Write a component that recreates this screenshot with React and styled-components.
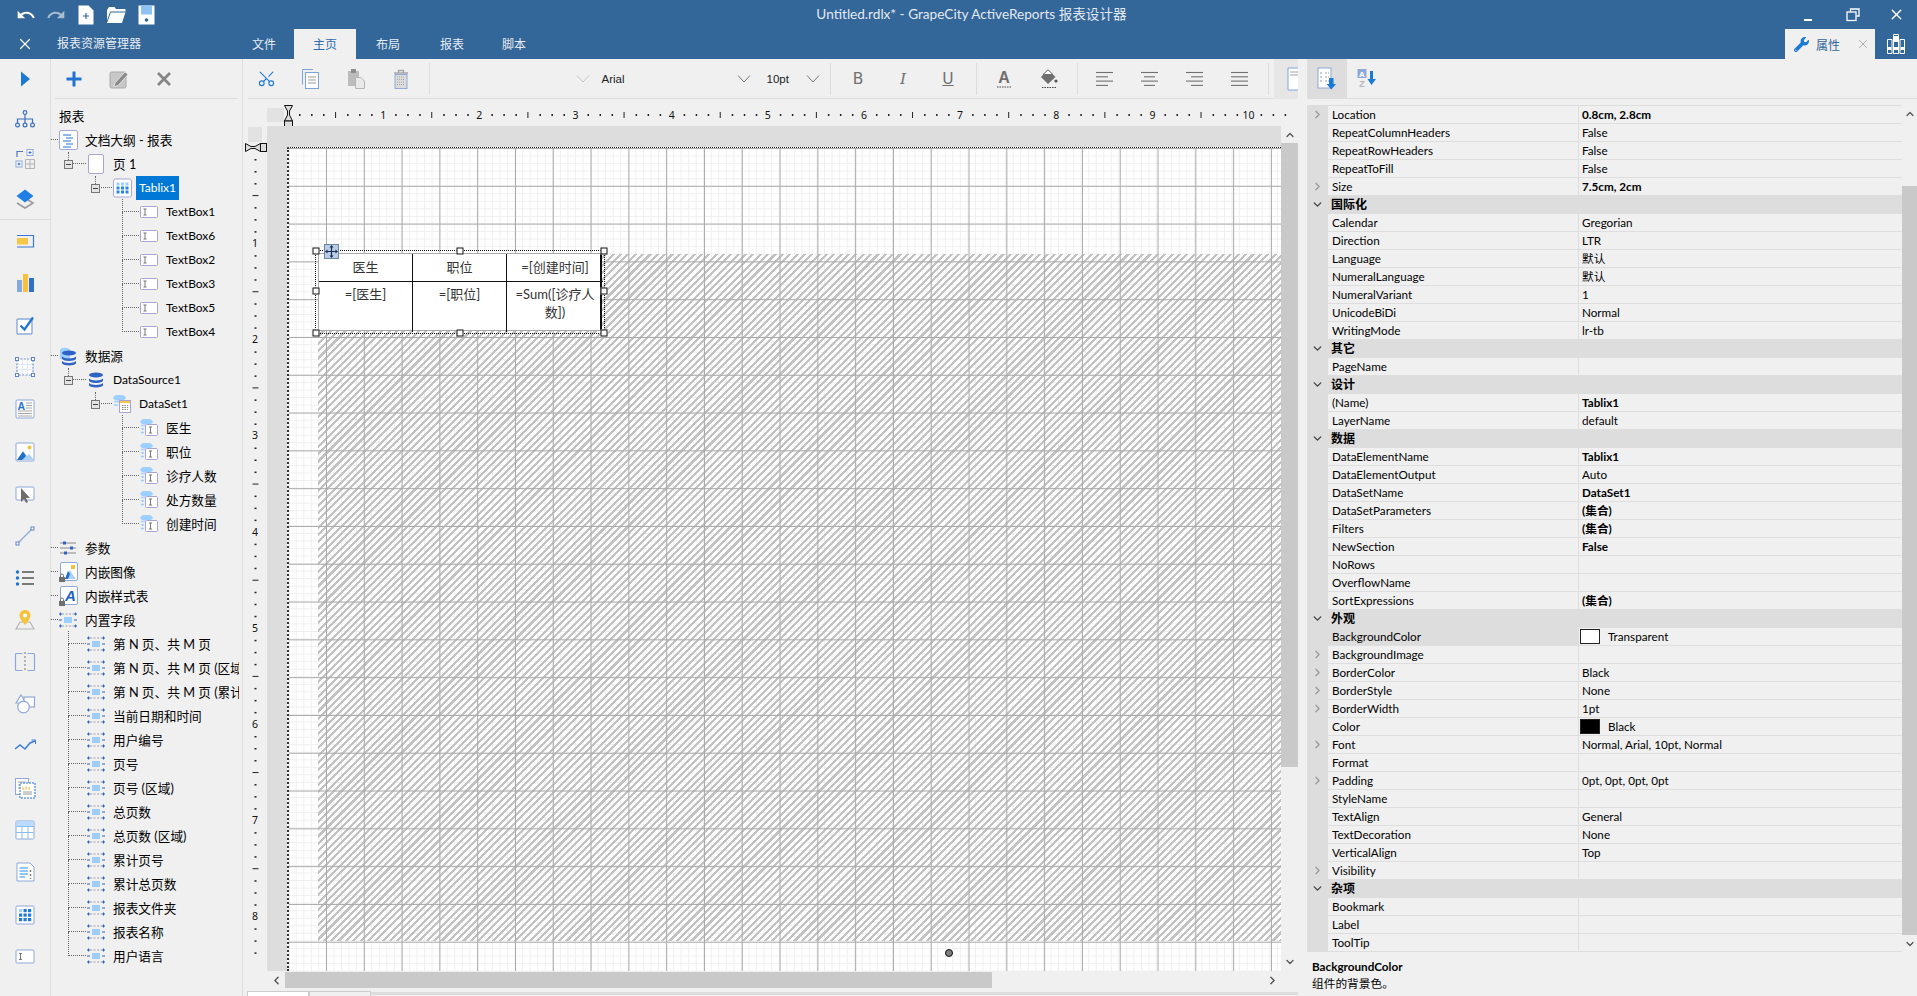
import React from "react";
import styled, { createGlobalStyle } from "styled-components";
import { ChevronRight, ChevronDown, ChevronUp, ChevronLeft, Scissors, X } from "lucide-react";
import { MdUndo, MdRedo } from "react-icons/md";
import { FaWrench } from "react-icons/fa";

const BLUE = "#336699";
const PANEL = "#f0f0f0";
const LINE = "#dddddd";
const FRAME = "#8ea9d8";
const ACCENT = "#1b7ad6";
const SOFT = "#9ccfff";

const GlobalStyle = createGlobalStyle`
  html, body { margin: 0; padding: 0; height: 100%; overflow: hidden; background: ${PANEL}; }
  body { font-family: Lato, "Noto Sans CJK SC", sans-serif; font-size: 11.7px; color: #000; }
  * { box-sizing: border-box; }
`;

const Shell = styled.div`
  width: 1917px;
  height: 996px;
  display: flex;
  flex-direction: column;
  overflow: hidden;
  background: ${PANEL};
`;

/* title bar */
const TitleBar = styled.header`
  background: ${BLUE};
  height: 59px;
  flex: none;
  color: #fff;
`;
const TopRow = styled.div`
  height: 29px;
  display: grid;
  grid-template-columns: 1fr auto 1fr;
  align-items: center;
`;
const QuickTools = styled.div`
  display: flex;
  padding-left: 11px;
`;
const QuickTool = styled.span`
  width: 30px;
  height: 29px;
  display: flex;
  align-items: center;
  justify-content: center;
  color: ${(p) => (p.$dim ? "#a9bdd2" : "#fff")};
`;
const AppTitle = styled.div`
  font-size: 13.6px;
  color: #e3e9f0;
  margin: -3px 0 0 26px;
  white-space: nowrap;
`;
const WindowTools = styled.div`
  display: flex;
  justify-content: flex-end;
`;
const WindowTool = styled.span`
  width: ${(p) => p.$w || 45}px;
  height: 29px;
  display: flex;
  align-items: center;
  justify-content: center;
`;
const TabRow = styled.div`
  height: 30px;
  display: flex;
  align-items: stretch;
`;
const CloseCell = styled.span`
  width: 49px;
  display: flex;
  align-items: center;
  justify-content: center;
`;
const ExplorerLabel = styled.span`
  width: 185px;
  padding-left: 8px;
  line-height: 30px;
  font-size: 12px;
  color: #e8edf3;
`;
const MenuTab = styled.span`
  width: ${(p) => p.$w}px;
  display: flex;
  align-items: center;
  justify-content: center;
  padding-bottom: 2px;
  font-size: 12px;
  color: ${(p) => (p.$active ? "#2b6cb0" : "#e8edf3")};
  background: ${(p) => (p.$active ? PANEL : "transparent")};
`;
const SideTab = styled.span`
  margin-left: auto;
  width: 90px;
  background: ${PANEL};
  color: #336699;
  display: flex;
  align-items: center;
  font-size: 12px;
  padding-left: 9px;
  gap: 7px;
`;
const SideTabClose = styled.span`
  margin-left: 9px;
  display: flex;
  color: #a8a8a8;
`;
const SideIcon = styled.span`
  width: 42px;
  display: flex;
  align-items: center;
  justify-content: center;
`;

/* main area */
const Main = styled.main`
  flex: 1;
  display: flex;
  min-height: 0;
`;

const Rail = styled.nav`
  width: 51px;
  flex: none;
  border-right: 1px solid ${LINE};
`;
const RailItem = styled.div`
  height: ${(p) => (p.$top ? 40 : 42.1)}px;
  display: flex;
  align-items: center;
  justify-content: center;
`;
const RailRule = styled.div`
  height: 1px;
  background: ${LINE};
`;

const TreePanel = styled.aside`
  width: 192px;
  flex: none;
  border-right: 1px solid ${LINE};
  overflow: hidden;
`;
const TreeTools = styled.div`
  height: 40px;
  margin: 0 4px;
  border-bottom: 1px solid ${LINE};
  display: flex;
  align-items: center;
  & > :first-child { margin-left: -4px; }
`;
const TreeTool = styled.span`
  width: 45px;
  display: flex;
  justify-content: center;
`;
const TreeHeading = styled.div`
  height: 24px;
  margin-top: 5px;
  padding-left: 8px;
  line-height: 24px;
  font-size: 12.7px;
`;
const TreeRow = styled.div`
  position: relative;
  height: 24px;
  display: flex;
  align-items: center;
  padding-left: ${(p) => [8, 36, 62, 89][p.$level]}px;
  padding-right: 3px;
  font-size: 12.7px;
  white-space: nowrap;
`;
const TreeGlyph = styled.span`
  width: 18px;
  height: 22px;
  flex: none;
  display: flex;
  align-items: center;
  justify-content: center;
  margin-right: 5px;
  background: ${PANEL};
  z-index: 1;
`;
const TreeText = styled.span`
  min-width: 0;
  overflow: hidden;
  padding: 0 3px;
  line-height: 24px;
  font-size: ${(p) => (p.$latin ? "12px" : "inherit")};
  background: ${(p) => (p.$selected ? "#0078d7" : "transparent")};
  color: ${(p) => (p.$selected ? "#fff" : "#000")};
`;
const Stem = styled.i`
  position: absolute;
  left: ${(p) => p.$x}px;
  width: ${(p) => p.$w}px;
  top: ${(p) => (p.$tall ? -12 : 0)}px;
  height: ${(p) => (p.$tall ? 24 : 12)}px;
  border-bottom: 1px dotted #666;
  border-left: ${(p) => (p.$bare ? "none" : "1px dotted #666")};
`;
const Expander = styled.i`
  position: absolute;
  left: ${(p) => p.$x}px;
  top: 8px;
  width: 9px;
  height: 9px;
  background: #e4e4e4;
  border: 1px solid #777;
  z-index: 1;
  &::after {
    content: "";
    position: absolute;
    left: 1px;
    right: 1px;
    top: 3px;
    height: 1px;
    background: #444;
  }
`;

/* centre column */
const Center = styled.section`
  width: 1055px;
  flex: none;
  display: flex;
  flex-direction: column;
  overflow: hidden;
`;
const Ribbon = styled.div`
  height: 40px;
  flex: none;
  margin-left: 5px;
  border-bottom: 1px solid ${LINE};
  display: flex;
  align-items: center;
`;
const RibbonGroup = styled.div`
  display: flex;
  margin-left: ${(p) => p.$shift || 0}px;
`;
const ToolButton = styled.span`
  width: 45px;
  height: 32px;
  display: flex;
  align-items: center;
  justify-content: center;
  color: #707070;
`;
const ToolLetter = styled.span`
  font-family: ${(p) => (p.$serif ? '"DejaVu Serif", serif' : '"DejaVu Sans", sans-serif')};
  font-size: 15.5px;
  font-style: ${(p) => (p.$italic ? "italic" : "normal")};
  text-decoration: ${(p) => (p.$under ? "underline" : "none")};
  color: #707070;
`;
const RibbonRule = styled.span`
  width: 1px;
  height: 32px;
  margin: 0 ${(p) => p.$after || 5}px 0 ${(p) => p.$before || 5}px;
  background: ${LINE};
`;
const FontBox = styled.div`
  width: ${(p) => p.$w}px;
  margin-left: ${(p) => p.$gap}px;
  display: flex;
  align-items: center;
  padding-top: 1px;
  color: #222;
  font-family: "Liberation Sans", sans-serif;
  font-size: 11.5px;
`;
const FontName = styled.span`
  margin-left: ${(p) => p.$gap}px;
`;
const Caret = styled.span`
  display: flex;
  margin-left: ${(p) => (p.$end ? "auto" : 0)};
`;
const RibbonEnd = styled.div`
  flex: 1;
  height: 40px;
  background: #e6e6e6;
  display: flex;
  align-items: center;
  padding-left: 13px;
`;
const TopRuler = styled.div`
  height: 27px;
  flex: none;
`;
const WorkArea = styled.div`
  height: 845px;
  flex: none;
  display: flex;
`;
const SideRuler = styled.div`
  width: 24px;
  flex: none;
`;
const Surface = styled.div`
  width: 1014px;
  flex: none;
  background: ${LINE};
  padding: 21px 0 0 20px;
  overflow: hidden;
`;
const Page = styled.div`
  position: relative;
  width: 100%;
  height: 100%;
  overflow: hidden;
  border-top: 1px dotted #222;
  border-left: 2px dotted #333;
  background-color: #fff;
  background-image:
    linear-gradient(#efefef 1.2px, transparent 1.2px),
    linear-gradient(90deg, #efefef 1.2px, transparent 1.2px);
  background-size: 100% 7.56px, 7.56px 100%;
  background-position: 0 0, -0.8px 0;
  &::before {
    content: "";
    position: absolute;
    inset: 0;
    z-index: 1;
    background-image:
      linear-gradient(#a9a9a9 1.4px, transparent 1.4px),
      linear-gradient(90deg, #a9a9a9 1.4px, transparent 1.4px);
    background-size: 100% 37.8px, 37.8px 100%;
    background-position: 0 0, -0.8px 0;
  }
`;
const Hatch = styled.div`
  position: absolute;
  left: 29px;
  top: 106px;
  right: 0;
  height: 687px;
  background: repeating-linear-gradient(135deg, #c2c2c2 0 2.2px, transparent 2.2px 5.2px);
`;
const Selection = styled.div`
  position: absolute;
  z-index: 2;
  left: 26px;
  top: 102px;
  width: 290px;
  height: 84px;
  border: 1px dotted #111;
`;
const Grip = styled.i`
  position: absolute;
  width: 7px;
  height: 7px;
  background: #fff;
  border: 1px solid #111;
  left: ${(p) => p.$x}%;
  top: ${(p) => p.$y}%;
  transform: translate(-50%, -50%);
`;
const MoveHandle = styled.span`
  position: absolute;
  left: 8px;
  top: -7px;
  width: 15px;
  height: 15px;
  background: #b9cde6;
  border: 1px solid #6c86a8;
  display: flex;
  align-items: center;
  justify-content: center;
`;
const ReportTable = styled.div`
  position: absolute;
  left: 2px;
  top: 2px;
  width: 284px;
  height: 78px;
  display: grid;
  grid-template-columns: 94px 94px 96px;
  grid-template-rows: 28px 50px;
  background: #fff;
  border-top: 1px solid #aaa;
  border-left: 1px solid #aaa;
  border-right: 2px solid #111;
  border-bottom: 1px solid #aaa;
  font-size: 13px;
  color: #333;
`;
const ReportCell = styled.div`
  text-align: center;
  line-height: 18px;
  padding: ${(p) => (p.$head ? "4px" : "3px")} 1px 0;
  border-right: ${(p) => (p.$last ? "none" : "1.5px solid #111")};
  border-bottom: ${(p) => (p.$head ? "1.5px solid #111" : "none")};
  white-space: ${(p) => (p.$wrap ? "normal" : "nowrap")};
`;
const Anchor = styled.i`
  position: absolute;
  z-index: 2;
  right: 328px;
  bottom: 14px;
  width: 8px;
  height: 8px;
  border-radius: 50%;
  background: #7d7d7d;
  border: 1px solid #111;
`;
const VScroll = styled.div`
  width: ${(p) => p.$w}px;
  flex: none;
  display: flex;
  flex-direction: column;
  align-items: center;
  color: #555;
`;
const ScrollEnd = styled.span`
  height: ${(p) => p.$h}px;
  flex: none;
  display: flex;
  align-items: center;
  justify-content: center;
  margin-top: ${(p) => (p.$push ? "auto" : 0)};
`;
const VThumb = styled.div`
  width: 100%;
  height: ${(p) => p.$h}px;
  margin-top: ${(p) => p.$gap || 0}px;
  background: #c9c9c9;
`;
const HScroll = styled.div`
  height: 18px;
  flex: none;
  margin-left: 24px;
  margin-right: 17px;
  display: flex;
  align-items: center;
  color: #555;
`;
const HEnd = styled.span`
  width: 18px;
  display: flex;
  justify-content: center;
  margin-left: ${(p) => (p.$push ? "auto" : 0)};
`;
const HThumb = styled.div`
  width: 707px;
  height: 16px;
  background: #c9c9c9;
`;
const SheetTabs = styled.div`
  flex: 1;
  display: flex;
  align-items: flex-start;
  margin-left: 4px;
  padding-top: 2px;
`;
const SheetTab = styled.span`
  width: 62px;
  height: 6px;
  background: ${(p) => (p.$on ? "#fff" : PANEL)};
  border: 1px solid #ccc;
  border-bottom: none;
`;
const SheetRest = styled.span`
  flex: 1;
  height: 3px;
  margin-top: 1px;
  background: ${LINE};
`;

const Splitter = styled.div`
  width: 9px;
  flex: none;
`;

/* property grid */
const Props = styled.section`
  flex: 1;
  display: flex;
  flex-direction: column;
  min-width: 0;
`;
const PropTools = styled.div`
  height: 40px;
  flex: none;
  border-bottom: 1px solid ${LINE};
  display: flex;
  margin-bottom: 6px;
`;
const PropTool = styled.span`
  width: 40px;
  display: flex;
  align-items: center;
  justify-content: center;
  background: ${(p) => (p.$on ? LINE : "transparent")};
`;
const PropBody = styled.div`
  display: flex;
  height: 848px;
  flex: none;
`;
const PropList = styled.div`
  width: 595px;
  flex: none;
  border-top: 1px solid ${LINE};
`;
const PropRow = styled.div`
  height: 18px;
  display: grid;
  grid-template-columns: 21px 251px 1fr;
  align-items: stretch;
  border-bottom: 1px solid #dedede;
  line-height: 17px;
  background: ${(p) => (p.$section ? LINE : "transparent")};
`;
const Gutter = styled.span`
  background: ${LINE};
  display: flex;
  align-items: center;
  justify-content: center;
  color: ${(p) => (p.$section ? "#444" : "#999")};
`;
const PropName = styled.span`
  padding-left: 4px;
  border-right: 1px solid #dedede;
  background: ${(p) => (p.$on ? LINE : "transparent")};
  white-space: nowrap;
`;
const SectionName = styled.span`
  grid-column: 2 / 4;
  padding-left: 3px;
  font-weight: 700;
  font-size: 12px;
`;
const PropValue = styled.span`
  padding-left: 3px;
  font-weight: ${(p) => (p.$bold ? 700 : 400)};
  display: flex;
  align-items: center;
  white-space: nowrap;
`;
const Swatch = styled.i`
  width: 20px;
  height: 15px;
  margin: 0 8px 0 -2px;
  background: ${(p) => p.$color};
  border: 1px solid #222;
`;
const Describe = styled.div`
  flex: 1;
  padding: 5px 0 0 5px;
  line-height: 17px;
`;
const DescribeTitle = styled.div`
  font-weight: 700;
`;

const Ico = styled.svg`
  display: block;
  flex: none;
`;

const G = ({ w = 22, h = 22, children }) => (
  <Ico width={w} height={h} viewBox={`0 0 ${w} ${h}`} fill="none">{children}</Ico>
);

const ThinCaret = ({ c = "#777" }) => (
  <G w={16} h={10}><path d="M2 1.500 8 8 14 1.500" stroke={c} strokeWidth="1" /></G>
);

/* rail drawings */
const railIcons = [
  <G><path d="M7 3.500 16 11 7 18.500Z" fill={ACCENT} /></G>,
  <G>
    <g stroke="#3c6fc2" strokeWidth="1.200">
      <circle cx="11" cy="4.500" r="1.800" />
      <path d="M11 6.500V11M3.500 15V11H18.500V15M11 11V15" />
      <circle cx="3.500" cy="17" r="1.900" /><circle cx="11" cy="17" r="1.900" /><circle cx="18.500" cy="17" r="1.900" />
    </g>
  </G>,
  <G>
    <path d="M3 9V3.500H9" stroke="#4a78c8" strokeWidth="1.200" />
    <rect x="13" y="1.500" width="6" height="6" stroke={FRAME} fill="#fff" />
    <path d="M16 3V6M14.500 4.500H17.500" stroke="#2d6fd0" />
    <rect x="2" y="13" width="6" height="6" stroke={FRAME} fill="#fff" />
    <path d="M5 14.500V17.500M3.500 16H6.500" stroke="#2d6fd0" />
    <path d="M11.500 11.500H20.500V20.500H11.500ZM16 11.500V20.500M11.500 16H20.500" stroke="#b3b3b3" />
  </G>,
  <G>
    <path d="M11 10 19 15 11 20 3 15" stroke="#9a9a9a" strokeWidth="1.600" />
    <path d="M11 1.500 19.500 8 11 14.500 2.500 8Z" fill="#1f7fe6" />
  </G>,
  <G>
    <rect x="3" y="8" width="11" height="6.500" fill="#f6c744" />
    <path d="M3 5.500H19.500V17H3" stroke="#3a7ad0" strokeWidth="1.200" />
  </G>,
  <G>
    <rect x="3" y="8" width="5" height="12" fill="#84abdf" />
    <rect x="9" y="2" width="5" height="18" fill="#f6c23c" />
    <rect x="15" y="6" width="5" height="14" fill="#2f6fc4" />
  </G>,
  <G>
    <rect x="3" y="5" width="15" height="15" rx="1" stroke={FRAME} strokeWidth="1.400" fill="#fff" />
    <path d="M6.500 11.500 10.500 15.500 19 3.500" stroke="#1f73d2" strokeWidth="2.200" />
  </G>,
  <G>
    <rect x="3" y="3" width="16" height="16" fill="#fff" />
    <path d="M3 8.500H19M3 13.500H19M8.500 3V19M13.500 3V19" stroke="#dfe8f6" />
    <rect x="3" y="3" width="16" height="16" stroke="#6f93d0" strokeWidth="1.200" strokeDasharray="2 1.400" />
    <g fill="#fff" stroke="#5c86cc"><rect x="1.500" y="1.500" width="3" height="3" /><rect x="17.500" y="1.500" width="3" height="3" /><rect x="1.500" y="17.500" width="3" height="3" /><rect x="17.500" y="17.500" width="3" height="3" /></g>
  </G>,
  <G>
    <rect x="2" y="2" width="18" height="18" rx="1" stroke={FRAME} fill="#fff" />
    <text x="3.500" y="12" fontSize="10.500" fontWeight="700" fill="#1f73d2" fontFamily="Liberation Sans">A</text>
    <path d="M12 5H18M12 7.500H18M12 10H18M4 13H18M4 15.500H18M4 18H18" stroke="#a4a4a4" />
  </G>,
  <G>
    <rect x="2" y="2" width="18" height="18" rx="1" stroke={FRAME} fill="#fff" />
    <circle cx="15.500" cy="6.500" r="2" fill="#f6c23c" />
    <path d="M3 19 9 10 13 15 15 13 20 19Z" fill="#a9d0f7" />
    <path d="M3 19 9 10.500 12 15 8 19Z" fill="#1f6fc9" />
  </G>,
  <G>
    <rect x="2" y="4" width="18" height="13" rx="1" stroke={FRAME} fill="#fff" />
    <path d="M7 5V19L10 16 12 20 14 19 12 15H16Z" fill="#6e6e6e" />
  </G>,
  <G>
    <path d="M4 18 18 4" stroke={FRAME} strokeWidth="1.200" />
    <rect x="2" y="17" width="3" height="3" stroke="#5c86cc" fill="#fff" />
    <rect x="17" y="2" width="3" height="3" stroke="#5c86cc" fill="#fff" />
  </G>,
  <G>
    <g fill="#1f73d2"><circle cx="3.500" cy="5" r="1.700" /><circle cx="3.500" cy="11" r="1.700" /><circle cx="3.500" cy="17" r="1.700" /></g>
    <path d="M8 5H20M8 11H20M8 17H20" stroke="#7a7a7a" strokeWidth="2" />
  </G>,
  <G>
    <path d="M2 20 6 13H16L20 20Z" stroke="#b5b5b5" strokeWidth="1.200" fill="none" />
    <path d="M11 1C7.500 1 5.500 3.500 5.500 6.500 5.500 10 11 16 11 16S16.500 10 16.500 6.500C16.500 3.500 14.500 1 11 1Z" fill="#f6c23c" />
    <circle cx="11" cy="6.500" r="2.100" fill="#fff" />
  </G>,
  <G>
    <path d="M8.500 2.500H2.500A1 1 0 0 0 1.500 3.500V18.500A1 1 0 0 0 2.500 19.500H8.500M13.500 2.500H19.500A1 1 0 0 1 20.500 3.500V18.500A1 1 0 0 1 19.500 19.500H13.500" stroke={FRAME} strokeWidth="1.200" />
    <path d="M11 1V21" stroke="#777" strokeDasharray="2 2" />
  </G>,
  <G>
    <path d="M7 2 12 10H2Z" stroke={FRAME} strokeWidth="1.200" fill="#fff" />
    <rect x="10" y="4" width="10.500" height="10" stroke={FRAME} strokeWidth="1.200" fill="#fff" />
    <circle cx="9.500" cy="14" r="5.800" stroke={FRAME} strokeWidth="1.200" fill="#fff" />
  </G>,
  <G><path d="M1 14 6 10 11 14 16 8 21 6" stroke="#3f7fd6" strokeWidth="1.600" /><path d="M17.500 5H21.500V9" stroke="#3f7fd6" strokeWidth="1" /></G>,
  <G>
    <rect x="1.500" y="1.500" width="13" height="16" stroke={FRAME} fill="#fff" />
    <path d="M4 5H12M4 8H12M4 11H12" stroke="#aaa" />
    <rect x="6" y="6" width="15" height="15" fill="#fff" stroke="#1f73d2" strokeDasharray="2 1" />
    <path d="M9 10V13M12 9.500V13M15 10V13" stroke="#f0b32c" />
    <path d="M9 15H18M9 17H18" stroke="#9a9a9a" />
  </G>,
  <G>
    <rect x="2" y="2" width="18" height="18" rx="1" stroke={FRAME} fill="#fff" />
    <rect x="2.500" y="2.500" width="17" height="5" fill="#b8dcfd" />
    <path d="M2 7.500H20M2 13.500H20M8 7.500V20M14 7.500V20" stroke="#8bbcf0" />
  </G>,
  <G>
    <path d="M3 2H16L20 6V20H3Z" stroke={FRAME} fill="#fff" />
    <path d="M5.500 7H14M5.500 10H14M5.500 13H14M5.500 16H11" stroke="#6fb4f5" strokeWidth="1.600" />
    <path d="M16.500 9V11M16.500 13V15M16.500 17V18" stroke="#777" strokeWidth="1.400" />
  </G>,
  <G>
    <rect x="2" y="2" width="18" height="18" rx="1" stroke={FRAME} fill="#fff" />
    {[5, 9.500, 14].map((y) => [5, 9.500, 14].map((x) => (
      <rect key={`${x}${y}`} x={x} y={y} width="3.200" height="3.200" fill={x > 9 || y > 9 ? "#1f7ad8" : SOFT} />
    )))}
  </G>,
  <G>
    <rect x="2" y="4" width="18" height="13" rx="1" stroke={FRAME} fill="#fff" />
    <path d="M5 7.500H8M5 13.500H8M6.500 7.500V13.500" stroke="#777" />
  </G>,
];

/* tree drawings */
const TextGlyph = () => (
  <G w={18} h={14}>
    <rect x="0.500" y="1.500" width="17" height="11" rx="1" stroke="#a8a5d6" fill="#fff" />
    <path d="M3.500 4H6.500M3.500 10H6.500M5 4V10" stroke="#777" />
  </G>
);
const DbStack = ({ c = "#2e62c4" }) => (
  <>
    <ellipse cx="8" cy="4" rx="7" ry="2.600" fill={c} />
    <path d="M1 7.500C3 10 13 10 15 7.500V10C13 12.500 3 12.500 1 10ZM1 12C3 14.500 13 14.500 15 12V14.500C13 17 3 17 1 14.500Z" fill={c} />
  </>
);
const OutlineGlyph = () => (
  <G w={19} h={20}>
    <rect x="0.500" y="0.500" width="18" height="19" rx="1.500" stroke="#a8a5d6" fill="#fff" />
    <path d="M4 5H12M7 8H14M4 11H12M7 14H14M4 17H12" stroke="#1f73d2" />
  </G>
);
const PageGlyph = () => (
  <G w={16} h={20}><rect x="0.500" y="0.500" width="15" height="19" rx="1.500" stroke="#a8a5d6" fill="#fff" /></G>
);
const TablixGlyph = () => (
  <G w={19} h={20}>
    <rect x="0.500" y="1" width="18" height="18" rx="2" stroke="#a8a5d6" fill="#fff" />
    {[4.500, 8.500, 12.500].map((y) => [3.500, 8, 12.500].map((x) => (
      <rect key={`${x}${y}`} x={x} y={y} width="3" height="3" fill={y > 8 ? "#2a86e6" : SOFT} />
    )))}
  </G>
);
const DbGlyph = () => <G w={16} h={18}><DbStack /></G>;
const DbRootGlyph = () => (
  <G w={18} h={19}>
    <path d="M1 3C1 0 10 0 11 3V12H1Z" fill={SOFT} />
    <g transform="translate(2 2)"><DbStack /></g>
  </G>
);
const SetGlyph = () => (
  <G w={18} h={18}>
    <path d="M1 3C1 0 12 0 12 3 12 5 1 5 1 3ZM1 6.500H6M1 10H5" stroke={SOFT} strokeWidth="1.600" fill={SOFT} />
    <rect x="6.500" y="5.500" width="11" height="12" stroke="#a8a5d6" fill="#fff" />
    <rect x="7" y="6" width="10" height="2" fill="#f6c744" />
    <path d="M9 10.500H15M9 12.500H15M9 14.500H15" stroke="#8b8b8b" strokeDasharray="1.500 1" />
  </G>
);
const FieldGlyph = () => (
  <G w={18} h={18}>
    <path d="M1 3C1 0 12 0 12 3 12 5 1 5 1 3ZM1 6.500H5M1 10H4M1 13.500H4" stroke={SOFT} strokeWidth="1.600" fill={SOFT} />
    <rect x="5.500" y="5.500" width="12" height="11" rx="1" stroke="#a8a5d6" fill="#fff" />
    <path d="M9 8H12M9 14H12M10.500 8V14" stroke="#777" />
  </G>
);
const ParamGlyph = () => (
  <G w={18} h={14}>
    <path d="M1 2H17M1 7H17M1 12H17" stroke="#888" />
    <rect x="4" y="0.500" width="3" height="3" fill="#2e62c4" /><rect x="11" y="5.500" width="3" height="3" fill="#2e62c4" /><rect x="5" y="10.500" width="3" height="3" fill="#2e62c4" />
  </G>
);
const Lock = () => (
  <>
    <rect x="0" y="15" width="6" height="5" fill="#6f6f6f" />
    <path d="M1.500 15V13.500A1.500 1.500 0 0 1 4.500 13.500V15" stroke="#6f6f6f" />
  </>
);
const ImageGlyph = () => (
  <G w={19} h={20}>
    <rect x="1.500" y="0.500" width="17" height="18" rx="1.500" stroke="#8ea9d8" fill="#fff" />
    <rect x="12" y="3" width="4" height="4" fill="#f6c23c" />
    <path d="M6 17 11 8 14 13 17 17Z" fill="#a9d0f7" />
    <path d="M6 17 9 9 11 12 9 17Z" fill="#1f6fc9" />
    <Lock />
  </G>
);
const SheetGlyph = () => (
  <G w={19} h={20}>
    <rect x="1.500" y="0.500" width="17" height="18" rx="1.500" stroke="#8ea9d8" fill="#fff" />
    <text x="6" y="15" fontSize="15" fontStyle="italic" fontWeight="700" fill="#1f5fc4" fontFamily="Liberation Sans">A</text>
    <Lock />
  </G>
);
const BuiltinGlyph = () => (
  <G w={18} h={16}>
    <path d="M3 2H15M3 14H15" stroke="#a0a0a0" strokeDasharray="2 1.500" />
    <rect x="5" y="5" width="8" height="6" fill="#9ccfff" />
    <path d="M1.500 0.500V3.500M0 2H3M16.500 0.500V3.500M15 2H18M1.500 12.500V15.500M0 14H3M16.500 12.500V15.500M15 14H18M0 8H3M15 8H18" stroke="#2e62c4" />
  </G>
);

const treeRows = [
  { t: "文档大纲 - 报表", l: 0, g: <OutlineGlyph /> },
  { t: "页 1", l: 1, g: <PageGlyph />, ex: true },
  { t: "Tablix1", l: 2, g: <TablixGlyph />, ex: true, sel: true, latin: true },
  ...["TextBox1", "TextBox6", "TextBox2", "TextBox3", "TextBox5", "TextBox4"].map((t) => ({ t, l: 3, g: <TextGlyph />, latin: true })),
  { t: "数据源", l: 0, g: <DbRootGlyph /> },
  { t: "DataSource1", l: 1, g: <DbGlyph />, ex: true, latin: true },
  { t: "DataSet1", l: 2, g: <SetGlyph />, ex: true, latin: true },
  ...["医生", "职位", "诊疗人数", "处方数量", "创建时间"].map((t) => ({ t, l: 3, g: <FieldGlyph /> })),
  { t: "参数", l: 0, g: <ParamGlyph /> },
  { t: "内嵌图像", l: 0, g: <ImageGlyph /> },
  { t: "内嵌样式表", l: 0, g: <SheetGlyph /> },
  { t: "内置字段", l: 0, g: <BuiltinGlyph /> },
  ...[
    "第 N 页、共 M 页", "第 N 页、共 M 页 (区域)", "第 N 页、共 M 页 (累计)", "当前日期和时间", "用户编号", "页号", "页号 (区域)",
    "总页数", "总页数 (区域)", "累计页号", "累计总页数", "报表文件夹", "报表名称", "用户语言",
  ].map((t) => ({ t, l: 1, g: <BuiltinGlyph />, leaf: true })),
];

function TreeLine({ row }) {
  const { l, ex, leaf } = row;
  if (l === 0) return <Stem $x={0} $w={7} $bare />;
  if (l === 3) return <Stem $x={71} $w={17} $tall />;
  if (l === 1 && leaf) return <Stem $x={17} $w={18} $tall />;
  const x = l === 1 ? 17 : 44;
  return (
    <>
      <Stem $x={x} $w={l === 1 ? 18 : 17} />
      {ex && <Expander $x={x - 4} />}
    </>
  );
}

/* ruler drawings */
function HorizontalRuler() {
  const ticks = [];
  for (let k = 1; k < 84; k++) {
    const x = 44 + k * 12.02;
    if (k % 8 === 0) {
      ticks.push(<text key={k} x={x} y={20} textAnchor="middle" fontSize="10.500" fill="#111" fontFamily="Noto Sans">{k / 8}</text>);
    } else if (k % 4 === 0) {
      ticks.push(<rect key={k} x={x} y={13} width="1" height="6" fill="#222" />);
    } else {
      ticks.push(<rect key={k} x={x} y={15} width="1.500" height="2" fill="#222" />);
    }
  }
  return (
    <G w={1055} h={27}>
      <rect x="24" y="9" width="17" height="14" fill="#e2e2e2" />
      <path d="M41.500 6.500H49.500L46.500 12V16L49.500 22H41.500L44.500 16V12Z" fill="#ddd" stroke="#111" />
      <rect x="41.500" y="22" width="8" height="6" fill="#ddd" stroke="#111" />
      {ticks}
    </G>
  );
}

function VerticalRuler() {
  const ticks = [];
  for (let k = 1; k < 68; k++) {
    const y = 21 + k * 12.02;
    if (k % 8 === 0) {
      ticks.push(<text key={k} x={12} y={y + 4} textAnchor="middle" fontSize="10.500" fill="#111" fontFamily="Noto Sans">{k / 8}</text>);
    } else if (k % 4 === 0) {
      ticks.push(<rect key={k} x={9.500} y={y} width="6" height="1" fill="#222" />);
    } else {
      ticks.push(<rect key={k} x={11.500} y={y} width="2" height="1.500" fill="#222" />);
    }
  }
  return (
    <G w={24} h={845}>
      <rect x="5" y="1" width="14" height="15" fill="#e2e2e2" />
      <path d="M2.500 17.500V25.500L8 22.500H12L17.500 25.500V17.500L12 20.500H8Z" fill="#ddd" stroke="#111" />
      <rect x="17.500" y="17.500" width="6" height="8" fill="#ddd" stroke="#111" />
      {ticks}
    </G>
  );
}

const AlignGlyph = ({ rows }) => (
  <G w={18} h={16}>
    {rows.map(([x1, x2], i) => (
      <path key={i} d={`M${x1} ${1.500 + i * 4.300}H${x2}`} stroke="#707070" strokeWidth="1.100" />
    ))}
  </G>
);

/* property data: [name, value, options] */
const propRows = [
  ["Location", "0.8cm, 2.8cm", { arrow: 1, bold: 1 }],
  ["RepeatColumnHeaders", "False"],
  ["RepeatRowHeaders", "False"],
  ["RepeatToFill", "False"],
  ["Size", "7.5cm, 2cm", { arrow: 1, bold: 1 }],
  ["国际化"],
  ["Calendar", "Gregorian"],
  ["Direction", "LTR"],
  ["Language", "默认"],
  ["NumeralLanguage", "默认"],
  ["NumeralVariant", "1"],
  ["UnicodeBiDi", "Normal"],
  ["WritingMode", "lr-tb"],
  ["其它"],
  ["PageName", ""],
  ["设计"],
  ["(Name)", "Tablix1", { bold: 1 }],
  ["LayerName", "default"],
  ["数据"],
  ["DataElementName", "Tablix1", { bold: 1 }],
  ["DataElementOutput", "Auto"],
  ["DataSetName", "DataSet1", { bold: 1 }],
  ["DataSetParameters", "(集合)", { bold: 1 }],
  ["Filters", "(集合)", { bold: 1 }],
  ["NewSection", "False", { bold: 1 }],
  ["NoRows", ""],
  ["OverflowName", ""],
  ["SortExpressions", "(集合)", { bold: 1 }],
  ["外观"],
  ["BackgroundColor", "Transparent", { swatch: "#ffffff", on: 1 }],
  ["BackgroundImage", "", { arrow: 1 }],
  ["BorderColor", "Black", { arrow: 1 }],
  ["BorderStyle", "None", { arrow: 1 }],
  ["BorderWidth", "1pt", { arrow: 1 }],
  ["Color", "Black", { swatch: "#000000" }],
  ["Font", "Normal, Arial, 10pt, Normal", { arrow: 1 }],
  ["Format", ""],
  ["Padding", "0pt, 0pt, 0pt, 0pt", { arrow: 1 }],
  ["StyleName", ""],
  ["TextAlign", "General"],
  ["TextDecoration", "None"],
  ["VerticalAlign", "Top"],
  ["Visibility", "", { arrow: 1 }],
  ["杂项"],
  ["Bookmark", ""],
  ["Label", ""],
  ["ToolTip", ""],
];

function PropLine({ row }) {
  const [name, value, opt = {}] = row;
  if (value === undefined) {
    return (
      <PropRow $section>
        <Gutter $section><ChevronDown size={13} strokeWidth={2.600} /></Gutter>
        <SectionName>{name}</SectionName>
      </PropRow>
    );
  }
  return (
    <PropRow>
      <Gutter>{opt.arrow ? <ChevronRight size={13} strokeWidth={2.200} /> : null}</Gutter>
      <PropName $on={opt.on}>{name}</PropName>
      <PropValue $bold={opt.bold}>
        {opt.swatch && <Swatch $color={opt.swatch} />}
        {value}
      </PropValue>
    </PropRow>
  );
}

const grips = [[0, 0], [50, 0], [100, 0], [0, 49], [100, 49], [0, 100], [50, 100], [100, 100]];

export default function App() {
  return (
    <Shell>
      <GlobalStyle />
      <TitleBar>
        <TopRow>
          <QuickTools>
            <QuickTool><MdUndo size={20} /></QuickTool>
            <QuickTool $dim><MdRedo size={20} /></QuickTool>
            <QuickTool>
              <G w={16} h={20}>
                <path d="M0.500 0.500H10.500L15.500 5.500V19.500H0.500Z" fill="#fff" />
                <path d="M8 8V14M5 11H11" stroke={BLUE} strokeWidth="1.200" />
              </G>
            </QuickTool>
            <QuickTool>
              <G w={20} h={18}>
                <path d="M1 4V17H16L19.500 6V3H10L8.500 1H3Z" fill="#fff" />
                <path d="M1 16 4.500 6H19.500" stroke={BLUE} />
              </G>
            </QuickTool>
            <QuickTool>
              <G w={17} h={20}>
                <path d="M0.500 0.500H16.500V19.500H0.500Z" fill="#fff" />
                <rect x="3" y="0.500" width="11" height="9" fill="#8fc3f5" />
                <circle cx="8.500" cy="15" r="1.800" fill={BLUE} />
              </G>
            </QuickTool>
          </QuickTools>
          <AppTitle>Untitled.rdlx* - GrapeCity ActiveReports 报表设计器</AppTitle>
          <WindowTools>
            <WindowTool>
              <G w={12} h={12}><path d="M2 11H10" stroke="#fff" strokeWidth="2" /></G>
            </WindowTool>
            <WindowTool>
              <G w={14} h={14}>
                <path d="M4.500 3.500V1H13V8H10.500" stroke="#fff" strokeWidth="1.300" />
                <rect x="1" y="4" width="9" height="8.500" stroke="#fff" strokeWidth="1.300" />
              </G>
            </WindowTool>
            <WindowTool $w={42}><X size={17} strokeWidth={2} color="#fff" /></WindowTool>
          </WindowTools>
        </TopRow>
        <TabRow>
          <CloseCell><X size={18} strokeWidth={1.600} color="#fff" /></CloseCell>
          <ExplorerLabel>报表资源管理器</ExplorerLabel>
          <MenuTab $w={60}>文件</MenuTab>
          <MenuTab $w={62} $active>主页</MenuTab>
          <MenuTab $w={64}>布局</MenuTab>
          <MenuTab $w={64}>报表</MenuTab>
          <MenuTab $w={60}>脚本</MenuTab>
          <SideTab>
            <FaWrench size={15} color={ACCENT} />
            <span>属性</span>
            <SideTabClose><X size={14} strokeWidth={1.600} /></SideTabClose>
          </SideTab>
          <SideIcon>
            <G w={18} h={20}>
              <path d="M0.500 5.500H5V19.500H0.500ZM6.500 0.500H11.500V19.500H6.500ZM13 5.500H17.500V19.500H13Z" stroke="#fff" />
              <path d="M1 13H4.500V16H1ZM7 13H11V16H7ZM13.500 13H17V16H13.500ZM7 2H11V8H7Z" fill="#fff" />
            </G>
          </SideIcon>
        </TabRow>
      </TitleBar>

      <Main>
        <Rail>
          {railIcons.slice(0, 4).map((icon, i) => <RailItem key={i} $top>{icon}</RailItem>)}
          <RailRule />
          {railIcons.slice(4).map((icon, i) => <RailItem key={i}>{icon}</RailItem>)}
        </Rail>

        <TreePanel>
          <TreeTools>
            <TreeTool>
              <G w={18} h={18}><path d="M9 1.500V16.500M1.500 9H16.500" stroke="#1f73d2" strokeWidth="3" /></G>
            </TreeTool>
            <TreeTool>
              <G w={20} h={20}>
                <rect x="1" y="3" width="16" height="16" rx="1.500" fill="#c8c8c8" stroke="#aaa" />
                <path d="M6 14 16 3 19 5.500 9 16.500 5 17.500Z" fill="#8a8a8a" stroke="#f0f0f0" strokeWidth="0.700" />
              </G>
            </TreeTool>
            <TreeTool>
              <G w={18} h={18}><path d="M3 3 15 15M15 3 3 15" stroke="#858585" strokeWidth="2.800" /></G>
            </TreeTool>
          </TreeTools>
          <TreeHeading>报表</TreeHeading>
          {treeRows.map((row, i) => (
            <TreeRow key={i} $level={row.l}>
              <TreeLine row={row} />
              <TreeGlyph>{row.g}</TreeGlyph>
              <TreeText $selected={row.sel} $latin={row.latin}>{row.t}</TreeText>
            </TreeRow>
          ))}
        </TreePanel>

        <Center>
          <Ribbon>
            <RibbonGroup $shift={-4.500}>
              <ToolButton><Scissors size={19} color={ACCENT} strokeWidth={1.400} style={{ transform: "rotate(-90deg)" }} /></ToolButton>
              <ToolButton>
                <G w={18} h={20}>
                  <path d="M0.500 15.500V0.500H11" stroke="#7fa4dc" />
                  <rect x="3.500" y="3.500" width="13" height="16" stroke="#7fa4dc" fill="#fff" />
                  <path d="M6 8H14M6 11H14M6 14H14" stroke="#9a9a9a" />
                </G>
              </ToolButton>
              <ToolButton>
                <G w={18} h={21}>
                  <rect x="1" y="3" width="11" height="15" fill="#bcbcbc" />
                  <rect x="4" y="1" width="5" height="4" fill="#8d8d8d" />
                  <path d="M8.500 9.500H14L17.500 13V20.500H8.500Z" fill="#e9e9e9" stroke="#b5b5b5" />
                </G>
              </ToolButton>
              <ToolButton>
                <G w={16} h={20}>
                  <path d="M1 4H15M5.500 4V1.500H10.500V4" stroke="#a7a7a7" strokeWidth="1.400" />
                  <rect x="2" y="5.500" width="12" height="14" fill="#dcdcdc" stroke="#8faad8" />
                  <path d="M4 8H12M4 10.500H12M4 13H12M4 15.500H12" stroke="#a5a5a5" strokeDasharray="1 1" />
                </G>
              </ToolButton>
            </RibbonGroup>
            <RibbonRule />
            <FontBox $w={177} $gap={140}>
              <Caret><ThinCaret c="#c4c4c4" /></Caret>
              <FontName $gap={11}>Arial</FontName>
              <Caret $end><ThinCaret /></Caret>
            </FontBox>
            <FontBox $w={61} $gap={8}>
              <FontName $gap={7}>10pt</FontName>
              <Caret $end><ThinCaret /></Caret>
            </FontBox>
            <RibbonRule $before={9} />
            <RibbonGroup>
              <ToolButton><ToolLetter>B</ToolLetter></ToolButton>
              <ToolButton><ToolLetter $serif $italic>I</ToolLetter></ToolButton>
              <ToolButton><ToolLetter $under>U</ToolLetter></ToolButton>
            </RibbonGroup>
            <RibbonRule />
            <RibbonGroup>
              <ToolButton>
                <G w={16} h={20}>
                  <text x="8" y="14" textAnchor="middle" fontSize="16" fontWeight="700" fill="#6f6f6f" fontFamily="Liberation Sans">A</text>
                  <path d="M1 18H15" stroke="#444" strokeDasharray="1.500 1" />
                </G>
              </ToolButton>
              <ToolButton>
                <G w={18} h={20}>
                  <path d="M8 0.500 15.500 8 8 15 1 8Z" fill="#6f6f6f" />
                  <path d="M3 5.500 8 0.800 13 5.500Z" fill="#fff" stroke="#6f6f6f" />
                  <circle cx="16" cy="12" r="1.600" fill="#555" />
                  <path d="M2 18.500H17" stroke="#444" strokeDasharray="1.500 1" />
                </G>
              </ToolButton>
            </RibbonGroup>
            <RibbonRule />
            <RibbonGroup>
              <ToolButton><AlignGlyph rows={[[0, 17], [0, 12], [0, 17], [0, 12]]} /></ToolButton>
              <ToolButton><AlignGlyph rows={[[0, 17], [3, 14], [0, 17], [3, 14]]} /></ToolButton>
              <ToolButton><AlignGlyph rows={[[0, 17], [5, 17], [0, 17], [5, 17]]} /></ToolButton>
              <ToolButton><AlignGlyph rows={[[0, 17], [0, 17], [0, 17], [0, 17]]} /></ToolButton>
            </RibbonGroup>
            <RibbonRule />
            <RibbonEnd>
              <G w={11} h={24}>
                <path d="M11 1H1V23H11" stroke="#7fa4dc" fill="#fff" />
                <path d="M3 5H11M3 8H11" stroke="#a5a5a5" />
              </G>
            </RibbonEnd>
          </Ribbon>

          <TopRuler><HorizontalRuler /></TopRuler>
          <WorkArea>
            <SideRuler><VerticalRuler /></SideRuler>
            <Surface>
              <Page>
                <Hatch />
                <Selection>
                  <ReportTable>
                    <ReportCell $head>医生</ReportCell>
                    <ReportCell $head>职位</ReportCell>
                    <ReportCell $head $last>=[创建时间]</ReportCell>
                    <ReportCell>=[医生]</ReportCell>
                    <ReportCell>=[职位]</ReportCell>
                    <ReportCell $last $wrap>=Sum([诊疗人数])</ReportCell>
                  </ReportTable>
                  {grips.map(([x, y]) => <Grip key={`${x}-${y}`} $x={x} $y={y} />)}
                  <MoveHandle>
                    <G w={13} h={13}>
                      <path d="M6.500 1V12M1 6.500H12" stroke="#1c2f55" strokeWidth="1.200" />
                      <path d="M6.500 0 4.500 2.500H8.500ZM6.500 13 4.500 10.500H8.500ZM0 6.500 2.500 4.500V8.500ZM13 6.500 10.500 4.500V8.500Z" fill="#1c2f55" />
                    </G>
                  </MoveHandle>
                </Selection>
                <Anchor />
              </Page>
            </Surface>
            <VScroll $w={17}>
              <ScrollEnd $h={17}><ChevronUp size={12} strokeWidth={2.600} /></ScrollEnd>
              <VThumb $h={624} />
              <ScrollEnd $h={18} $push><ChevronDown size={12} strokeWidth={2.600} /></ScrollEnd>
            </VScroll>
          </WorkArea>
          <HScroll>
            <HEnd><ChevronLeft size={13} strokeWidth={2.600} /></HEnd>
            <HThumb />
            <HEnd $push><ChevronRight size={13} strokeWidth={2.600} /></HEnd>
          </HScroll>
          <SheetTabs>
            <SheetTab $on />
            <SheetTab />
            <SheetRest />
          </SheetTabs>
        </Center>

        <Splitter />

        <Props>
          <PropTools>
            <PropTool $on>
              <G w={20} h={24}>
                <rect x="1" y="1" width="13" height="20" fill="#fff" stroke="#8ea9d8" />
                <path d="M3 6H6M8 6H12M3 10H6M8 10H12M3 14H6M8 14H12" stroke="#9a9a9a" strokeDasharray="2 1" />
                <path d="M12 11H16.500V17H19L14.250 22.500 9.500 17H12Z" fill={ACCENT} />
              </G>
            </PropTool>
            <PropTool>
              <G w={20} h={22}>
                <rect x="0.500" y="1" width="9" height="9" fill="#8ea9d8" />
                <text x="5" y="8.500" textAnchor="middle" fontSize="8" fontWeight="700" fill="#fff" fontFamily="Liberation Sans">A</text>
                <text x="5" y="19" textAnchor="middle" fontSize="9" fontWeight="700" fill="#b5b5b5" fontFamily="Liberation Sans">Z</text>
                <path d="M13 3H16V11H19L14.500 17 10.500 11H13Z" fill={ACCENT} />
              </G>
            </PropTool>
          </PropTools>
          <PropBody>
            <PropList>
              {propRows.map((row) => <PropLine key={row[0]} row={row} />)}
            </PropList>
            <VScroll $w={15}>
              <ScrollEnd $h={18}><ChevronUp size={12} strokeWidth={2.600} /></ScrollEnd>
              <VThumb $h={749} $gap={63} />
              <ScrollEnd $h={18}><ChevronDown size={12} strokeWidth={2.600} /></ScrollEnd>
            </VScroll>
          </PropBody>
          <Describe>
            <DescribeTitle>BackgroundColor</DescribeTitle>
            <div>组件的背景色。</div>
          </Describe>
        </Props>
      </Main>
    </Shell>
  );
}
